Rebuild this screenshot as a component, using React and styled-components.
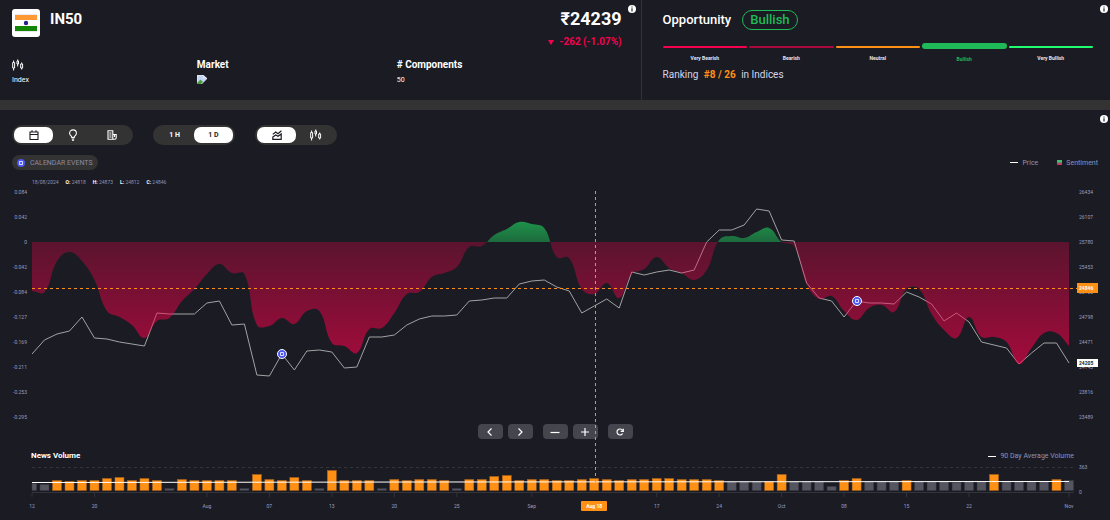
import React, { useState } from "react";
import styled, { createGlobalStyle } from "styled-components";

const GlobalStyle = createGlobalStyle`
  * {
    box-sizing: border-box;
  }

  body {
    margin: 0;
    background: #1b1b23;
    color: #fff;
    font-family: Roboto, "Liberation Sans", sans-serif;
  }

  button {
    font-family: inherit;
    border: none;
    padding: 0;
    cursor: pointer;
  }

  svg {
    display: block;
  }
`;

const Page = styled.div`
  display: flex;
  flex-direction: column;
`;

const Summary = styled.header`
  display: flex;
  min-height: 110px;
  border-bottom: 10px solid #333;
`;

const AssetPanel = styled.section`
  position: relative;
  flex: 0 0 57.8%;
  padding: 9px 19px 0 12px;
  border-right: 1px solid #333;
`;

const AssetTop = styled.div`
  display: flex;
  align-items: flex-start;
  height: 50px;
`;

const FlagBox = styled.div`
  width: 28px;
  height: 28px;
  background: #fff;
  border-radius: 3px;
`;

const AssetName = styled.h1`
  flex: 1;
  margin: 0 0 0 10px;
  font-size: 15px;
  font-weight: 700;
  line-height: 20px;
`;

const PriceBox = styled.div`
  text-align: right;
`;

const Price = styled.div`
  font-size: 18px;
  font-weight: 700;
  line-height: 20px;
`;

const Change = styled.div`
  display: flex;
  align-items: center;
  justify-content: flex-end;
  gap: 5px;
  margin-top: 5px;
  color: #f5004f;
  font-size: 10px;
  font-weight: 700;
  line-height: 16px;
`;

const Facts = styled.div`
  display: grid;
  grid-template-columns: 37fr 40fr 45fr;
`;

const Fact = styled.div`
  font-size: 7px;
  line-height: 10px;
`;

const FactTitle = styled.div`
  height: 12px;
  margin-bottom: 4px;
  font-size: 10px;
  font-weight: 700;
  line-height: 12px;
`;

const InfoButton = styled.button`
  position: absolute;
  top: 5px;
  right: ${(p) => p.$right || 2}px;
  width: 8px;
  height: 8px;
  background: none;
`;

const OpportunityPanel = styled.section`
  position: relative;
  flex: 1;
  padding: 10px 17px 0 21px;
`;

const OpportunityTitle = styled.div`
  display: flex;
  align-items: center;
  gap: 11px;
  font-size: 13px;
  font-weight: 500;
  line-height: 18px;
`;

const Pill = styled.span`
  padding: 0 7px;
  border: 1px solid #1fba57;
  border-radius: 10px;
  color: #1fba57;
`;

const Scale = styled.div`
  display: grid;
  grid-template-columns: repeat(5, 1fr);
  gap: 2px;
  margin-top: 13px;
`;

const Level = styled.div`
  text-align: center;
  font-size: 5px;
  font-weight: 700;
  line-height: 6px;
  color: ${(p) => (p.$active ? p.$color : "#e4e4f4")};

  &::before {
    content: "";
    display: block;
    height: ${(p) => (p.$active ? 6 : 2)}px;
    margin: ${(p) => (p.$active ? "0 0 7px" : "3px 0 7px")};
    border-radius: 3px;
    background: ${(p) => p.$color};
  }
`;

const Ranking = styled.div`
  margin-top: 6px;
  color: #d5d5ea;
  font-size: 10px;
  line-height: 14px;

  strong {
    margin: 0 3px;
    color: #ff9016;
    font-weight: 700;
  }
`;

const ChartPanel = styled.main`
  position: relative;
  padding-top: 15px;
`;

const Toolbar = styled.div`
  display: flex;
  gap: 20px;
  padding: 0 12px;
`;

const Group = styled.div`
  display: flex;
  padding: 2px;
  border-radius: 10px;
  background: #333;
`;

const Toggle = styled.button`
  display: flex;
  align-items: center;
  justify-content: center;
  width: 39px;
  height: 16px;
  border-radius: 7px;
  font-size: 7px;
  font-weight: 700;
  background: ${(p) => (p.$active ? "#fff" : "transparent")};
  color: ${(p) => (p.$active ? "#1b1b23" : "#fff")};
`;

const LegendRow = styled.div`
  display: flex;
  align-items: center;
  justify-content: space-between;
  margin-top: 10px;
  padding: 0 12px;
`;

const Chip = styled.button`
  display: flex;
  align-items: center;
  gap: 5px;
  height: 15px;
  padding: 0 5px;
  border-radius: 8px;
  background: #333;
  color: #8b8ba6;
  font-size: 7px;
`;

const Legend = styled.div`
  display: flex;
  gap: 19px;
`;

const LegendItem = styled.span`
  display: flex;
  align-items: center;
  gap: 4px;
  color: #8e93b8;
  font-size: 7px;
  line-height: 10px;

  &::before {
    content: "";
    width: ${(p) => (p.$square ? 5 : 8)}px;
    height: ${(p) => (p.$square ? 5 : 1)}px;
    background: ${(p) => (p.$square ? "linear-gradient(#3fc070 30%, #c2305b 80%)" : "#fff")};
  }
`;

const Ohlc = styled.div`
  display: flex;
  gap: 7px;
  margin: 8px 0 3px 32px;
  color: #8e93b8;
  font-size: 5px;
  line-height: 8px;

  b {
    color: #fff;
  }
`;

const Plots = styled.div`
  position: relative;
`;

const PlotRow = styled.div`
  display: grid;
  grid-template-columns: 32px 1fr 41px;
`;

const Plot = styled.div`
  position: relative;
  grid-column: 2;

  svg {
    width: 100%;
    overflow: visible;
  }
`;

const Axis = styled.div`
  position: relative;
  display: flex;
  flex-direction: column;
  justify-content: space-between;
  padding: ${(p) => (p.$right ? "0 0 0 10px" : "0 5px 0 0")};
  text-align: ${(p) => (p.$right ? "left" : "right")};
  color: #9a9fc2;
  font-size: 5px;
  line-height: 6px;
`;

const PriceTag = styled.span`
  position: absolute;
  left: 8px;
  width: 21px;
  height: ${(p) => (p.$live ? 8 : 10)}px;
  padding-left: 2px;
  line-height: ${(p) => (p.$live ? 8 : 10)}px;
  font-weight: 700;
  background: ${(p) => (p.$live ? "#fff" : "#ff9016")};
  color: ${(p) => (p.$live ? "#1b1b23" : "#fff")};
  transform: translateY(-50%);
`;

const EventPin = styled.button`
  position: absolute;
  display: flex;
  align-items: center;
  justify-content: center;
  width: 10px;
  height: 10px;
  border: 1px solid #fff;
  border-radius: 50%;
  background: #4c55f5;
  transform: translate(-50%, -50%);
`;

const EventDot = styled.span`
  display: flex;
  align-items: center;
  justify-content: center;
  width: 8px;
  height: 8px;
  border-radius: 50%;
  background: #4c55f5;
`;

const Controls = styled.nav`
  display: flex;
  justify-content: center;
  gap: 10px;
  margin-top: 4px;
`;

const ControlPair = styled.div`
  display: flex;
  gap: 5px;
`;

const Control = styled.button`
  display: flex;
  align-items: center;
  justify-content: center;
  width: 25px;
  height: 15px;
  border-radius: 4px;
  background: #45454d;
  color: #fff;
`;

const NewsHeader = styled.div`
  display: flex;
  align-items: center;
  justify-content: space-between;
  margin: 12px 0 3px;
  padding: 0 36px 0 31px;
`;

const NewsTitle = styled.h2`
  margin: 0;
  font-size: 8px;
  font-weight: 700;
  line-height: 10px;
`;

const VolumeAxis = styled(Axis)`
  padding-bottom: 3px;
`;

const Dates = styled.div`
  position: relative;
  height: 10px;
  margin: 3px 41px 8px 32px;
`;

const DateLabel = styled.span`
  position: absolute;
  color: #9a9fc2;
  font-size: 5px;
  line-height: 10px;
  transform: translateX(-50%);
`;

const DateTag = styled(DateLabel)`
  width: 26px;
  border-radius: 1px;
  background: #ff9016;
  color: #fff;
  font-weight: 700;
  text-align: center;
`;

const CrosshairLayer = styled.div`
  position: absolute;
  top: 2px;
  bottom: 20px;
  left: 32px;
  right: 41px;
  pointer-events: none;

  svg {
    width: 100%;
    height: 100%;
  }
`;

const WIDTH = 1037;
const STEP = WIDTH / 83;
const ZERO = 53;

const price = [
  165, 151, 145, 142, 128, 149, 150, 153, 155, 157, 124, 125, 125, 125, 114, 112, 136, 135, 186, 187, 165,
  181, 162, 161, 163, 179, 178, 148, 148, 146, 136, 130, 127, 127, 126, 112, 111, 109, 109, 95, 92, 91, 98,
  102, 124, 117, 110, 119, 83, 86, 83, 81, 84, 81, 53, 41, 41, 36, 20, 22, 51, 52, 94, 109, 112, 128, 112,
  114, 114, 115, 103, 108, 115, 132, 124, 133, 153, 156, 159, 175, 164, 154, 154, 174,
];

const sentiment = [
  102, 103, 72, 63, 72, 91, 122, 128, 136, 149, 132, 129, 112, 100, 85, 75, 84, 85, 136, 137, 129, 135, 122,
  122, 154, 157, 164, 140, 139, 124, 105, 103, 88, 84, 78, 58, 57, 46, 40, 33, 35, 39, 68, 69, 100, 105, 94,
  109, 85, 80, 68, 79, 84, 91, 81, 51, 47, 49, 43, 39, 53, 57, 95, 110, 107, 122, 131, 119, 116, 123, 100,
  100, 125, 141, 149, 128, 148, 148, 153, 175, 159, 144, 144, 157,
];

const volume = [
  7, 6, 10, 9, 10, 10, 12, 13, 10, 12, 10, 2, 11, 10, 10, 10, 10, 2, 16, 11, 10, 13, 10, 2, 20, 10, 10, 10,
  2, 11, 10, 11, 11, 10, 2, 11, 11, 14, 15, 10, 11, 11, 10, 10, 11, 12, 11, 10, 11, 11, 12, 12, 11, 11, 11,
  10, 9, 9, 9, 9, 16, 9, 9, 9, 4, 10, 12, 9, 9, 9, 10, 9, 9, 9, 8, 9, 9, 16, 9, 9, 9, 9, 11, 10,
];

const quietDays = [
  0, 1, 11, 17, 23, 28, 34, 56, 57, 58, 61, 62, 63, 64, 67, 68, 69, 71, 72, 73, 74, 75, 76, 78, 79, 80, 81, 83,
];

const sentimentTicks = ["0.084", "0.042", "0", "-0.042", "-0.084", "-0.127", "-0.169", "-0.211", "-0.253", "-0.295"];
const priceTicks = [26434, 26107, 25780, 25453, 25125, 24798, 24471, 24143, 23816, 23489];

const dates = [
  [0, "12"],
  [5, "20"],
  [14, "Aug"],
  [19, "07"],
  [24, "13"],
  [29, "20"],
  [34, "25"],
  [40, "Sep"],
  [50, "17"],
  [55, "24"],
  [60, "Oct"],
  [65, "08"],
  [70, "15"],
  [75, "22"],
  [83, "Nov"],
];

const levels = [
  { label: "Very Bearish", color: "#f5004f" },
  { label: "Bearish", color: "#a8083c" },
  { label: "Neutral", color: "#ff9016" },
  { label: "Bullish", color: "#1fba57", active: true },
  { label: "Very Bullish", color: "#1fff70" },
];

const events = [
  { index: 20, top: 165 },
  { index: 66, top: 112 },
];

const percent = (index) => `${(index / 83) * 100}%`;

const linePath = price.map((y, i) => `${i ? "L" : "M"}${i * STEP} ${y}`).join(" ");

// control points are weighted by the length of the segment on each side
function splinePath(values, tension = 0.42) {
  const points = values.map((y, i) => [i * STEP, y]);
  const handles = points.map((p, i) => {
    const prev = points[i - 1] || p;
    const next = points[i + 1] || p;
    const before = Math.hypot(p[0] - prev[0], p[1] - prev[1]);
    const after = Math.hypot(next[0] - p[0], next[1] - p[1]);
    const a = (tension * before) / (before + after);
    const b = (tension * after) / (before + after);
    const dx = next[0] - prev[0];
    const dy = next[1] - prev[1];
    return [p[0] - a * dx, p[1] - a * dy, p[0] + b * dx, p[1] + b * dy];
  });
  let d = `M0 ${values[0]}`;
  for (let i = 1; i < points.length; i++) {
    const [, , x1, y1] = handles[i - 1];
    const [x2, y2] = handles[i];
    d += ` C${x1} ${y1} ${x2} ${y2} ${points[i][0]} ${points[i][1]}`;
  }
  return d;
}

const areaPath = `${splinePath(sentiment)} L${WIDTH} ${ZERO} L0 ${ZERO} Z`;

const FlagIcon = () => (
  <svg width="28" height="28" viewBox="0 0 28 28">
    <rect x="3" y="5" width="22" height="18" fill="#e8e8ee" />
    <rect x="3" y="6" width="22" height="5" fill="#ff9933" />
    <rect x="3" y="11" width="22" height="6" fill="#fff" />
    <rect x="3" y="17" width="22" height="5" fill="#138808" />
    <circle cx="14" cy="14" r="2.2" fill="#23238e" />
  </svg>
);

const InfoIcon = () => (
  <svg width="8" height="8" viewBox="0 0 8 8">
    <circle cx="4" cy="4" r="4" fill="#fff" />
    <path d="M4 1.5v1.1M4 3.2v3.2" stroke="#1b1b23" strokeWidth="1.1" />
  </svg>
);

const CandlesIcon = () => (
  <svg width="12" height="12" viewBox="0 0 12 12" fill="none" stroke="currentColor">
    <path d="M0.700 3.500h1.900v5.500H0.700zM1.600 1.500v2M1.600 9v2.500M5 2h1.500v3H5zM5.700 0.500v1.500M5.700 5v2.500M8.700 5h1.900v4H8.700zM9.700 3.500v1.500M9.700 9v1.500" />
  </svg>
);

const CalendarIcon = () => (
  <svg width="10" height="10" viewBox="0 0 10 10" fill="none" stroke="currentColor">
    <path d="M1 2h8v7.500H1zM1 4.500h8M3 0.300v2M7 0.300v2" strokeWidth="1.1" />
  </svg>
);

const BulbIcon = () => (
  <svg width="10" height="12" viewBox="0 0 10 12" fill="none" stroke="currentColor">
    <path
      d="M3.700 8.500V7.500C2.200 6.600 1.600 5.500 1.600 4.300a3.400 3.400 0 0 1 6.800 0c0 1.200-.6 2.300-2.100 3.200v1zM3.700 10h2.600M4.200 11.400h1.600"
      strokeWidth="1.1"
    />
  </svg>
);

const NewsIcon = () => (
  <svg width="10" height="10" viewBox="0 0 10 10" fill="none" stroke="currentColor">
    <path
      d="M1 0.800h4.800v8.400H1zM5.800 4.500h3.400v3.200a1.500 1.500 0 0 1-1.500 1.500H5.800M7.500 4.500v2.500M2.300 3h2.200M2.300 5h2.200M2.300 7h2.200"
      strokeWidth="1.1"
    />
  </svg>
);

const AreaIcon = () => (
  <svg width="10" height="10" viewBox="0 0 10 10" fill="none" stroke="currentColor">
    <path d="M0.800 9.300V7L3.700 4.900 6 6.300 9.200 3.900v5.400zM0.800 4.400l2.900-2.400L6 3.700 9.400 0.800" strokeWidth="1.2" />
  </svg>
);

const MissingImage = () => (
  <svg width="10" height="9" viewBox="0 0 10 9">
    <path d="M0 0h6.500L10 3v6H0z" fill="#dfe3ec" />
    <path d="M1 1h5v2.500h3V8H1z" fill="#c3d4f4" />
    <path d="M0 8l3.500-3.500L6 7 4 9H0z" fill="#4f9d3a" />
    <path d="M5 9l5-5v5z" fill="#1b1b23" />
  </svg>
);

const EventGlyph = () => (
  <svg width="4" height="4" viewBox="0 0 4 4" fill="none" stroke="#fff">
    <path d="M0.500 0.500h3v3h-3z" strokeWidth="0.800" />
  </svg>
);

const ControlIcon = ({ d }) => (
  <svg width="10" height="10" viewBox="0 0 10 10" fill="none" stroke="currentColor" strokeWidth="1.2">
    <path d={d} />
  </svg>
);

function SentimentPlot() {
  return (
    <svg height="231" viewBox={`0 0 ${WIDTH} 231`} preserveAspectRatio="none">
      <defs>
        <linearGradient id="up" gradientUnits="userSpaceOnUse" x1="0" x2="0" y1="32" y2={ZERO}>
          <stop offset="0" stopColor="#1fba57" stopOpacity="0.75" />
          <stop offset="1" stopColor="#1fba57" stopOpacity="0.5" />
        </linearGradient>
        <linearGradient id="down" gradientUnits="userSpaceOnUse" x1="0" x2="0" y1={ZERO} y2="176">
          <stop offset="0" stopColor="#ff004c" stopOpacity="0.28" />
          <stop offset="1" stopColor="#ff004c" stopOpacity="0.6" />
        </linearGradient>
        <clipPath id="above">
          <rect width={WIDTH} height={ZERO} />
        </clipPath>
        <clipPath id="below">
          <rect y={ZERO} width={WIDTH} height="178" />
        </clipPath>
      </defs>
      <path d={linePath} fill="none" stroke="#a2a2a5" vectorEffect="non-scaling-stroke" />
      <path d={areaPath} fill="url(#up)" clipPath="url(#above)" />
      <path d={areaPath} fill="url(#down)" clipPath="url(#below)" />
      <path
        d={`M0 99.500H${WIDTH + 8}`}
        stroke="#ff9016"
        strokeDasharray="3 3"
        vectorEffect="non-scaling-stroke"
      />
    </svg>
  );
}

function VolumePlot() {
  return (
    <svg height="34" viewBox={`0 0 ${WIDTH} 34`} preserveAspectRatio="none">
      <path d={`M0 3.500H${WIDTH + 5}`} stroke="#33333a" strokeDasharray="3 3" />
      {volume.map((h, i) => {
        const quiet = quietDays.includes(i);
        const x = Math.max(0, i * STEP - 4.5);
        return (
          <rect
            key={i}
            x={x}
            y={26.5 - h}
            width={i * STEP + 4.5 - x}
            height={h}
            fill={quiet ? "#555562" : "#ff9016"}
            stroke={quiet ? "#3b3b45" : "#a8641e"}
            strokeWidth="0.500"
          />
        );
      })}
      <path d={`M0 28.500H${WIDTH + 5}`} stroke="#33333a" />
      {dates.map(([i]) => (
        <path key={i} d={`M${i * STEP} 29v4`} stroke="#33333a" />
      ))}
      <path d={`M0 18.500L400 18 ${WIDTH} 17.500`} fill="none" stroke="#fff" vectorEffect="non-scaling-stroke" />
    </svg>
  );
}

function App() {
  const [view, setView] = useState("calendar");
  const [period, setPeriod] = useState("1 D");
  const [chart, setChart] = useState("area");

  const views = [
    ["calendar", <CalendarIcon />],
    ["ideas", <BulbIcon />],
    ["news", <NewsIcon />],
  ];
  const charts = [
    ["area", <AreaIcon />],
    ["candles", <CandlesIcon />],
  ];

  return (
    <Page>
      <GlobalStyle />
      <Summary>
        <AssetPanel>
          <AssetTop>
            <FlagBox>
              <FlagIcon />
            </FlagBox>
            <AssetName>IN50</AssetName>
            <PriceBox>
              <Price>₹24239</Price>
              <Change>
                <svg width="6" height="5" viewBox="0 0 6 5">
                  <path d="M0 0h6L3 5z" fill="currentColor" />
                </svg>
                -262 (-1.07%)
              </Change>
            </PriceBox>
          </AssetTop>
          <Facts>
            <Fact>
              <FactTitle>
                <CandlesIcon />
              </FactTitle>
              Index
            </Fact>
            <Fact>
              <FactTitle>Market</FactTitle>
              <MissingImage />
            </Fact>
            <Fact>
              <FactTitle># Components</FactTitle>
              50
            </Fact>
          </Facts>
          <InfoButton $right={5} aria-label="About price">
            <InfoIcon />
          </InfoButton>
        </AssetPanel>
        <OpportunityPanel>
          <OpportunityTitle>
            Opportunity <Pill>Bullish</Pill>
          </OpportunityTitle>
          <Scale>
            {levels.map((l) => (
              <Level key={l.label} $color={l.color} $active={l.active}>
                {l.label}
              </Level>
            ))}
          </Scale>
          <Ranking>
            Ranking <strong>#8 / 26</strong> in Indices
          </Ranking>
          <InfoButton aria-label="About opportunity">
            <InfoIcon />
          </InfoButton>
        </OpportunityPanel>
      </Summary>

      <ChartPanel>
        <InfoButton aria-label="About chart">
          <InfoIcon />
        </InfoButton>
        <Toolbar>
          <Group>
            {views.map(([name, icon]) => (
              <Toggle key={name} aria-label={name} $active={view === name} onClick={() => setView(name)}>
                {icon}
              </Toggle>
            ))}
          </Group>
          <Group>
            {["1 H", "1 D"].map((name) => (
              <Toggle key={name} $active={period === name} onClick={() => setPeriod(name)}>
                {name}
              </Toggle>
            ))}
          </Group>
          <Group>
            {charts.map(([name, icon]) => (
              <Toggle key={name} aria-label={name} $active={chart === name} onClick={() => setChart(name)}>
                {icon}
              </Toggle>
            ))}
          </Group>
        </Toolbar>

        <LegendRow>
          <Chip>
            <EventDot>
              <EventGlyph />
            </EventDot>
            CALENDAR EVENTS
          </Chip>
          <Legend>
            <LegendItem>Price</LegendItem>
            <LegendItem $square>Sentiment</LegendItem>
          </Legend>
        </LegendRow>

        <Ohlc>
          <span>18/08/2024</span>
          <span><b>O:</b> 24818</span>
          <span><b>H:</b> 24873</span>
          <span><b>L:</b> 24812</span>
          <span><b>C:</b> 24846</span>
        </Ohlc>

        <Plots>
          <PlotRow>
            <Axis>
              {sentimentTicks.map((t) => (
                <span key={t}>{t}</span>
              ))}
            </Axis>
            <Plot>
              <SentimentPlot />
              {events.map((e) => (
                <EventPin key={e.index} aria-label="Calendar event" style={{ left: percent(e.index), top: e.top }}>
                  <EventGlyph />
                </EventPin>
              ))}
            </Plot>
            <Axis $right>
              {priceTicks.map((t) => (
                <span key={t}>{t}</span>
              ))}
              <PriceTag style={{ top: 99 }}>24846</PriceTag>
              <PriceTag $live style={{ top: 174 }}>24205</PriceTag>
            </Axis>
          </PlotRow>

          <Controls>
            <ControlPair>
              <Control aria-label="Previous">
                <ControlIcon d="M6.500 1.500L3 5l3.500 3.500" />
              </Control>
              <Control aria-label="Next">
                <ControlIcon d="M3.500 1.500L7 5 3.500 8.500" />
              </Control>
            </ControlPair>
            <ControlPair>
              <Control aria-label="Zoom out">
                <ControlIcon d="M0.500 5.500h9" />
              </Control>
              <Control aria-label="Zoom in">
                <ControlIcon d="M1 5h8M5 1v8" />
              </Control>
            </ControlPair>
            <Control aria-label="Reset">
              <ControlIcon d="M7.600 6.500A3 3 0 1 1 7.500 3.300M8.300 1.800v2.500H5.700" />
            </Control>
          </Controls>

          <NewsHeader>
            <NewsTitle>News Volume</NewsTitle>
            <LegendItem>90 Day Average Volume</LegendItem>
          </NewsHeader>
          <PlotRow>
            <Plot>
              <VolumePlot />
            </Plot>
            <VolumeAxis $right>
              <span>363</span>
              <span>0</span>
            </VolumeAxis>
          </PlotRow>
          <Dates>
            {dates.map(([i, label]) => (
              <DateLabel key={i} style={{ left: percent(i) }}>
                {label}
              </DateLabel>
            ))}
            <DateTag style={{ left: percent(45) }}>Aug 18</DateTag>
          </Dates>

          <CrosshairLayer>
            <svg>
              <line x1={percent(45.1)} x2={percent(45.1)} y1="0" y2="100%" stroke="#ff9016" strokeDasharray="3 3" />
            </svg>
          </CrosshairLayer>
        </Plots>
      </ChartPanel>
    </Page>
  );
}

export default App;
